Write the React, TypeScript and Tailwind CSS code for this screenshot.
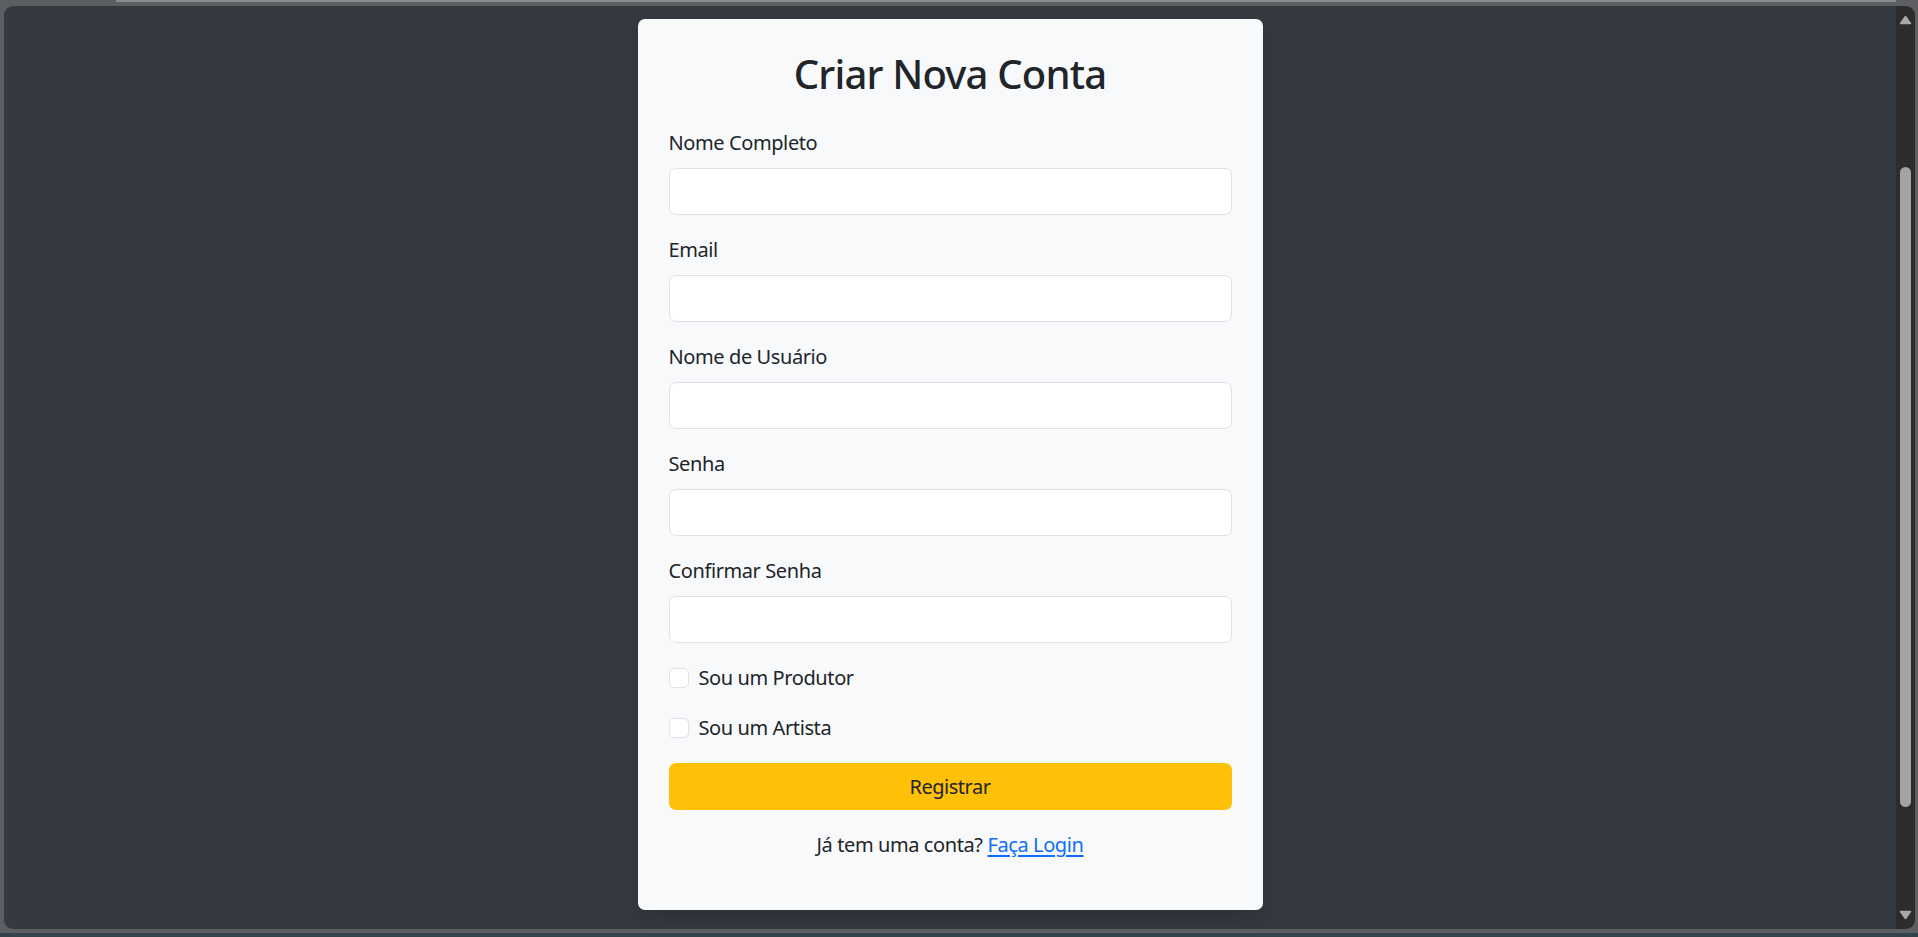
import React, { useState } from 'react';

interface Field {
  id: string;
  label: string;
  type: string;
}

const fields: Field[] = [
  { id: 'nome', label: 'Nome Completo', type: 'text' },
  { id: 'email', label: 'Email', type: 'email' },
  { id: 'usuario', label: 'Nome de Usuário', type: 'text' },
  { id: 'senha', label: 'Senha', type: 'password' },
  { id: 'confirmar', label: 'Confirmar Senha', type: 'password' },
];

const checks = [
  { id: 'produtor', label: 'Sou um Produtor' },
  { id: 'artista', label: 'Sou um Artista' },
];

const Arrow: React.FC<{ down?: boolean }> = ({ down }) => (
  <svg width="13" height="10" viewBox="0 0 13 10" className={down ? 'rotate-180' : ''}>
    <path d="M6.5 1.5 L11.5 8.5 L1.5 8.5 Z" fill="#a8a8a8" stroke="#a8a8a8" strokeWidth="1.5" strokeLinejoin="round" />
  </svg>
);

const App: React.FC = () => {
  const [values, setValues] = useState<Record<string, string>>({});
  const [flags, setFlags] = useState<Record<string, boolean>>({});

  return (
    <div
      className="flex h-[937px] w-full flex-col overflow-hidden bg-[#5d5e62]"
      style={{ fontFamily: '"Noto Sans", "Open Sans", sans-serif' }}
    >
      {/* window top edge */}
      <div className="flex h-[6px] shrink-0">
        <div className="ml-[116px] mr-[22px] h-[2px] flex-1 bg-[#8b8c8f]" />
      </div>

      <div className="flex h-[923px] shrink-0 pl-[4px] pr-[3px]">
        <div className="flex w-full overflow-hidden rounded-[9px]">
          <main className="flex flex-1 items-start justify-center bg-[#343a40] pt-[13px]">
            <div className="w-[625px] rounded-[7px] bg-[#f8f9fa] px-[31px] pt-[31px] pb-[30px] text-[#212529] tracking-[-0.025em] shadow-[0_10px_20px_rgba(0,0,0,0.15)]">
              <h2 className="mb-[30px] text-center text-[40px] leading-[48px] font-medium tracking-[-0.02em]">
                Criar Nova Conta
              </h2>

              {fields.map((f) => (
                <div key={f.id} className="mb-[20px]">
                  <label htmlFor={f.id} className="mb-[10px] block text-[20px] leading-[30px]">
                    {f.label}
                  </label>
                  <input
                    id={f.id}
                    type={f.type}
                    value={values[f.id] || ''}
                    onChange={(e) => setValues({ ...values, [f.id]: e.target.value })}
                    className="block h-[47px] w-full rounded-[7px] border border-[#dee2e6] bg-white px-[15px] text-[20px] outline-none"
                  />
                </div>
              ))}

              {checks.map((c) => (
                <div key={c.id} className="mb-[20px] flex h-[30px] items-center">
                  <input
                    id={c.id}
                    type="checkbox"
                    checked={!!flags[c.id]}
                    onChange={(e) => setFlags({ ...flags, [c.id]: e.target.checked })}
                    className="mr-[10px] h-[20px] w-[20px] appearance-none rounded-[5px] border border-[#dee2e6] bg-white checked:border-[#0d6efd] checked:bg-[#0d6efd]"
                  />
                  <label htmlFor={c.id} className="text-[20px] leading-[30px]">
                    {c.label}
                  </label>
                </div>
              ))}

              <button
                type="submit"
                className="block h-[47px] w-full rounded-[7px] bg-[#ffc107] text-[20px] leading-[30px] tracking-[-0.025em] text-[#212529]"
              >
                Registrar
              </button>

              <p className="mt-[20px] mb-[20px] text-center text-[20px] leading-[30px]">
                Já tem uma conta?{' '}
                <a href="#" className="text-[#0d6efd] underline underline-offset-[3px]">
                  Faça Login
                </a>
              </p>
            </div>
          </main>

          {/* scrollbar */}
          <div className="flex w-[19px] shrink-0 flex-col items-center bg-[#2c2c2c] pt-[9px]">
            <Arrow />
            <div className="mt-[142px] h-[640px] w-[11px] rounded-full bg-[#a3a3a3]" />
            <div className="mt-[103px]">
              <Arrow down />
            </div>
          </div>
        </div>
      </div>

      <div className="h-[4px] shrink-0" />
      <div className="h-[4px] shrink-0 bg-[#33434b]" />
    </div>
  );
};

export default App;
